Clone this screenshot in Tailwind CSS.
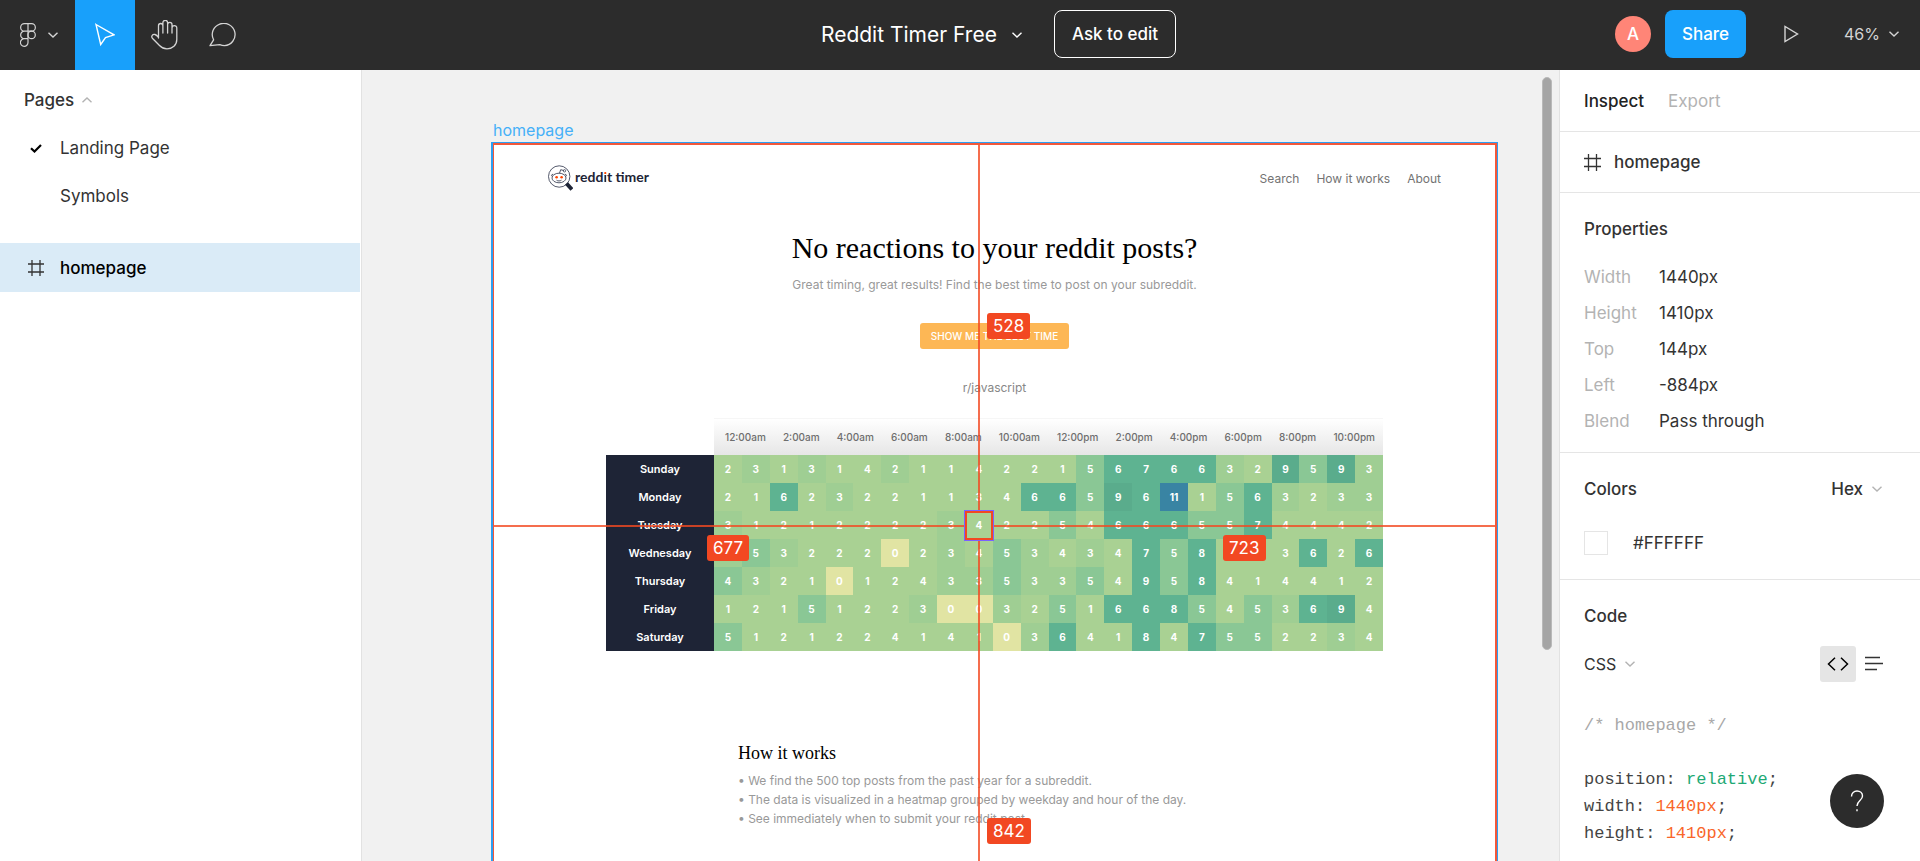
<!DOCTYPE html>
<html lang="en">
<head>
<meta charset="utf-8">
<meta name="viewport" content="width=device-width, initial-scale=1">
<title>Reddit Timer Free</title>
<script src="https://cdn.jsdelivr.net/npm/@tailwindcss/browser@4"></script>
</head>
<body class="flex h-screen flex-col overflow-hidden bg-white font-['Inter',sans-serif] text-[17px]/6 text-[#333]">

<header class="flex h-[70px] shrink-0 bg-[#2c2c2c] text-white">
  <div class="flex flex-1">
    <button aria-label="Main menu" class="flex w-[75px] items-center gap-3 pl-5">
      <svg class="h-6 w-4" viewBox="0 0 16 24" fill="none" stroke="#d4d4d4" stroke-width="1.2"><path d="M8 .7H4.4a3.7 3.7 0 0 0 0 7.5H8zM8 .7h3.6a3.7 3.7 0 0 1 0 7.5H8zM8 8.2H4.4a3.7 3.7 0 0 0 0 7.5H8zM8 15.7H4.4a3.8 3.8 0 1 0 3.6 3.8z"/><circle cx="11.6" cy="11.9" r="3.7"/></svg>
      <svg class="h-[6px] w-[10px]" viewBox="0 0 10 6" fill="none" stroke="#d4d4d4" stroke-width="1.4"><path d="M.5.7 5 5 9.500.7"/></svg>
    </button>
    <button aria-label="Move" class="flex w-[60px] items-center justify-center bg-[#18a0fb]">
      <svg class="h-6 w-5" viewBox="0 0 20 24" fill="none" stroke="#fff" stroke-width="1.4"><path d="M1 1.500 19 11.800 10.500 14.500 5.700 21.500z"/></svg>
    </button>
    <button aria-label="Hand tool" class="flex w-[58px] items-center justify-center">
      <svg class="h-[30px] w-[27px]" viewBox="0 0 27 30" fill="none" stroke="#d4d4d4" stroke-width="1.3" stroke-linejoin="round" stroke-linecap="round"><path d="M7.500 18V5.700a2.200 2.200 0 0 1 4.400 0V13M11.900 13V2.700a2.300 2.300 0 0 1 4.700 0V13M16.600 4.500a2.200 2.200 0 0 1 4.400 0V13M21 8a2.200 2.200 0 0 1 4.800 0V19.500c0 5.500-4.300 9.300-9.800 9.300-3.500 0-5.800-1.500-7.500-3.300L1.600 18.500C-.3 16.500 1.500 13.800 4 14.500c1.400.4 2.500 1.500 3.500 3"/></svg>
    </button>
    <button aria-label="Comment" class="flex w-[60px] items-center justify-center">
      <svg class="h-6 w-7" viewBox="0 0 28 24" fill="none" stroke="#d4d4d4" stroke-width="1.3" stroke-linejoin="round"><path d="M4.600 16.800A11.400 11.200 0 1 1 15.500 22.700c-1.700 0-3.300-.4-4.700-1L1 22.700z"/></svg>
    </button>
  </div>
  <div class="flex items-center pl-[98px]">
    <button class="flex items-center gap-[15px] text-[21px]/6">Reddit Timer Free
      <svg class="h-[6px] w-[10px]" viewBox="0 0 10 6" fill="none" stroke="#fff" stroke-width="1.4"><path d="M.5.700 5 5 9.500.700"/></svg>
    </button>
    <button class="mb-[2px] ml-8 h-12 rounded-lg border border-white px-[17px] font-medium">Ask to edit</button>
  </div>
  <div class="flex flex-1 items-center justify-end pr-[21px] pb-[2px]">
    <span class="flex size-9 items-center justify-center rounded-full bg-[#ff8577] font-medium">A</span>
    <button class="ml-[14px] h-12 rounded-lg bg-[#18a0fb] px-[17px] font-medium">Share</button>
    <button aria-label="Present" class="ml-[38px]">
      <svg class="h-[18px] w-[15px]" viewBox="0 0 15 18" fill="none" stroke="#d4d4d4" stroke-width="1.4"><path d="M1 1.500v15L13.500 9z"/></svg>
    </button>
    <button class="ml-[45px] flex items-center gap-[9px] text-base text-[#d4d4d4]">46%
      <svg class="h-[6px] w-[10px]" viewBox="0 0 10 6" fill="none" stroke="#d4d4d4" stroke-width="1.4"><path d="M.5.700 5 5 9.500.700"/></svg>
    </button>
  </div>
</header>

<div class="flex min-h-0 flex-1">
  <aside class="w-[362px] shrink-0 border-r border-[#e2e2e2] pt-[6px] pr-px">
    <button class="flex h-12 items-center gap-2 pl-6 font-medium">Pages
      <svg class="h-[6px] w-[10px]" viewBox="0 0 10 6" fill="none" stroke="#b3b3b3" stroke-width="1.4"><path d="M.500 5.300 5 1 9.500 5.300"/></svg>
    </button>
    <ul>
      <li class="flex h-12 items-center pl-[30px]">
        <svg class="h-[9px] w-3" viewBox="0 0 12 9" fill="none" stroke="#000" stroke-width="2.200"><path d="M1 4.200 4.500 7.500 11 1"/></svg>
        <a href="#" class="ml-[18px]">Landing Page</a>
      </li>
      <li class="flex h-12 items-center pl-[60px]"><a href="#">Symbols</a></li>
    </ul>
    <div class="mt-[23px] flex h-[49px] items-center bg-[#daebf7] pl-7 font-medium text-black">
      <svg class="size-4" viewBox="0 0 16 16" fill="none" stroke="#333" stroke-width="1.300"><path d="M4 0v16M12 0v16M0 4h16M0 12h16"/></svg>
      <a href="#" class="ml-4">homepage</a>
    </div>
  </aside>

  <main class="relative min-w-0 flex-1 overflow-hidden bg-[#f1f1f1] pt-12 pr-[61px] pl-[129px]">
    <h2 class="pl-[2px] text-base/6 text-[#45b0f8]">homepage</h2>

    <section class="border border-l-2 border-[#2b9ff3] bg-white">
      <div class="relative h-[900px] border-2 border-l border-[#f2583a] pt-5">
        <div class="flex h-[26px] items-center px-[54px]">
          <svg class="h-[26px] w-[25px]" viewBox="0 0 25 26" fill="none" stroke="#2a3046"><circle cx="11.200" cy="11.500" r="10.700" stroke-width=".8"/><path d="M18.500 18.500 24 24.500" stroke="#1e2436" stroke-width="4"/><ellipse cx="11" cy="13" rx="7" ry="4.800" stroke-width=".8"/><path d="M4.500 11.500c-1.500-.500-1.200-2.500.8-2.200M17.500 11.500c1.500-.500 1.200-2.500-.8-2.200M11.500 8.200l1.200-3.500 3 .8M8.500 15.200c1.500 1 3.500 1 5 0" stroke-width=".8"/><circle cx="16.500" cy="5.800" r="1.200" stroke-width=".7"/><circle cx="8.600" cy="12.300" r="1.300" fill="#ff4500" stroke="none"/><circle cx="13.600" cy="12.300" r="1.300" fill="#ff4500" stroke="none"/></svg>
          <span class="ml-[2px] pb-[2px] font-['Lato',sans-serif] text-sm/5 font-bold text-[#1e2436]">redd<span class="bg-linear-to-b from-[#ff4500] from-35% to-[#1e2436] to-35% bg-clip-text text-transparent">i</span>t t<span class="bg-linear-to-b from-[#ff4500] from-35% to-[#1e2436] to-35% bg-clip-text text-transparent">i</span>mer</span>
          <nav class="ml-auto flex gap-[17px] pt-[2px] text-xs/5 text-[#737373]"><a href="#">Search</a><a href="#">How it works</a><a href="#">About</a></nav>
        </div>

        <h1 class="mt-[39px] text-center font-['Liberation_Serif',serif] text-[30px]/9 text-black">No reactions to your reddit posts?</h1>
        <p class="mt-[9px] text-center text-xs/5 text-[#999]">Great timing, great results! Find the best time to post on your subreddit.</p>
        <div class="mt-7 flex justify-center"><button class="h-[26px] rounded-[3px] bg-[#fdb755] px-[11px] text-[10px]/4 font-medium text-white">SHOW ME THE BEST TIME</button></div>
        <p class="mt-[29px] text-center text-xs/5 text-[#878787]">r/javascript</p>

        <div class="mt-[21px] px-28">
          <table class="w-full table-fixed border-collapse text-center text-[10px]/4 font-bold text-white">
            <colgroup><col class="w-[108px]"><col span="24"></colgroup>
            <thead>
              <tr class="h-9"><td class="p-0"></td>
                <th colspan="24" class="bg-linear-to-b from-white to-[#e6e6e6] p-0 shadow-[0_-1px_#f6f6f6]">
                  <div class="flex justify-between pr-2 pl-[11px] text-[10px]/4 font-medium text-[#6e6e6e]"><span>12:00am</span><span>2:00am</span><span>4:00am</span><span>6:00am</span><span>8:00am</span><span>10:00am</span><span>12:00pm</span><span>2:00pm</span><span>4:00pm</span><span>6:00pm</span><span>8:00pm</span><span>10:00pm</span></div>
                </th></tr>
            </thead>
            <tbody id="heatmap"></tbody>
          </table>
        </div>

        <div class="mt-[90px] pl-[244px]">
          <h3 class="font-['Liberation_Serif',serif] text-lg/6 text-black">How it works</h3>
          <ul class="mt-[6px] text-xs/[19px] text-[#999]">
            <li>• We find the 500 top posts from the past year for a subreddit.</li>
            <li>• The data is visualized in a heatmap grouped by weekday and hour of the day.</li>
            <li>• See immediately when to submit your reddit post.</li>
          </ul>
        </div>

        <!-- Measurement guides around the hovered cell -->
        <div class="absolute top-0 left-[484px] h-[366px] w-[2px] bg-[#f24822]/80"></div>
        <div class="absolute top-[396px] bottom-0 left-[484px] w-[2px] bg-[#f24822]/80"></div>
        <div class="absolute top-[380px] left-0 h-[2px] w-[471px] bg-[#f24822]/80"></div>
        <div class="absolute top-[380px] right-0 left-[499px] h-[2px] bg-[#f24822]/80"></div>
        <div class="absolute top-[365px] left-[470px] h-[31px] w-[30px] border border-[#7b61ff]"><div class="size-full border-2 border-[#f24822]"></div></div>
        <span class="absolute top-[168px] left-[493px] rounded-[3px] bg-[#f24822] px-[6px] leading-[26px] text-white">528</span>
        <span class="absolute top-[390px] left-[213px] rounded-[3px] bg-[#f24822] px-[6px] leading-[26px] text-white">677</span>
        <span class="absolute top-[390px] left-[729px] rounded-[3px] bg-[#f24822] px-[6px] leading-[26px] text-white">723</span>
        <span class="absolute top-[673px] left-[493px] rounded-[3px] bg-[#f24822] px-[6px] leading-[26px] text-white">842</span>
      </div>
    </section>

    <div class="absolute top-[7px] right-[7px] h-[573px] w-[10px] rounded-full border border-[#b9b9b9] bg-[#a5a5a5]"></div>
  </main>

  <aside class="relative w-[361px] shrink-0 overflow-hidden border-l border-[#e2e2e2]">
    <div class="flex h-[62px] items-center gap-6 border-b border-[#e5e5e5] px-6">
      <button class="font-medium text-[#222]">Inspect</button><button class="text-[#b3b3b3]">Export</button>
    </div>
    <div class="flex h-[61px] items-center border-b border-[#e5e5e5] px-6 font-medium">
      <svg class="size-[17px]" viewBox="0 0 17 17" fill="none" stroke="#333" stroke-width="1.300"><path d="M4.500 0v17M12.500 0v17M0 4.500h17M0 12.500h17"/></svg>
      <span class="ml-[13px]">homepage</span>
    </div>
    <section class="border-b border-[#e5e5e5] px-6 pt-3 pb-[13px]">
      <h2 class="leading-[48px] font-medium">Properties</h2>
      <dl class="mt-[6px] grid grid-cols-[75px_1fr] leading-9">
        <dt class="text-[#b3b3b3]">Width</dt><dd>1440px</dd>
        <dt class="text-[#b3b3b3]">Height</dt><dd>1410px</dd>
        <dt class="text-[#b3b3b3]">Top</dt><dd>144px</dd>
        <dt class="text-[#b3b3b3]">Left</dt><dd>-884px</dd>
        <dt class="text-[#b3b3b3]">Blend</dt><dd>Pass through</dd>
      </dl>
    </section>
    <section class="border-b border-[#e5e5e5] px-6 pt-3 pb-3">
      <div class="flex h-12 items-center justify-between pr-[14px]">
        <h2 class="font-medium">Colors</h2>
        <label class="flex items-center gap-[9px]">
          <select aria-label="Color format" class="field-sizing-content appearance-none font-medium"><option>Hex</option></select>
          <svg class="h-[6px] w-[10px]" viewBox="0 0 10 6" fill="none" stroke="#b3b3b3" stroke-width="1.400"><path d="M.500.700 5 5 9.500.700"/></svg>
        </label>
      </div>
      <div class="mt-[6px] flex h-12 items-center gap-[25px]">
        <span class="size-6 border border-[#e5e5e5] bg-white"></span><span>#FFFFFF</span>
      </div>
    </section>
    <section class="px-6 pt-3">
      <h2 class="leading-[48px] font-medium">Code</h2>
      <div class="flex h-12 items-center">
        <label class="flex items-center gap-[9px]">
          <select aria-label="Code language" class="field-sizing-content appearance-none text-base"><option>CSS</option></select>
          <svg class="h-[6px] w-[10px]" viewBox="0 0 10 6" fill="none" stroke="#b3b3b3" stroke-width="1.400"><path d="M.500.700 5 5 9.500.700"/></svg>
        </label>
        <button aria-label="Code view" class="ml-auto flex size-9 items-center justify-center rounded-[3px] bg-[#e5e5e5]">
          <svg class="h-[14px] w-[22px]" viewBox="0 0 22 14" fill="none" stroke="#000" stroke-width="1.500"><path d="M8 .700 1.500 7 8 13.300M14 .700 20.500 7 14 13.300"/></svg>
        </button>
        <button aria-label="Table view" class="mr-[13px] ml-[9px]">
          <svg class="h-4 w-[18px]" viewBox="0 0 18 16" fill="none" stroke="#333" stroke-width="1.300"><path d="M0 1.500h15M0 7.500h18M0 13.500h12"/></svg>
        </button>
      </div>
      <div class="mt-6 font-['Liberation_Mono',monospace] leading-[27px] text-[#444]">
        <p class="mb-[27px] text-[#a8a8a8]">/* homepage */</p>
        <p>position: <span class="text-[#1ea974]">relative</span>;</p>
        <p>width: <span class="text-[#f9662a]">1440px</span>;</p>
        <p>height: <span class="text-[#f9662a]">1410px</span>;</p>
      </div>
    </section>
    <button aria-label="Help" class="absolute right-9 bottom-[33px] flex size-[54px] items-center justify-center rounded-full bg-[#2c2c2c]">
      <svg class="h-[22px] w-[14px]" viewBox="0 0 14 22" fill="none" stroke="#fff" stroke-width="1.400"><path d="M1.500 6.500C1.500 3 4 1 7 1s5.500 2 5.500 5c0 4.500-5.500 4.500-5.500 10M7 19.300v2"/></svg>
    </button>
  </aside>
</div>

<script>
// Shade per cell: a (empty) to g (most posts)
const shades = {
  a: 'bg-[#e1e4a3]', b: 'bg-[#a9d193]', c: 'bg-[#9fce93]', d: 'bg-[#8ac795]',
  e: 'bg-[#5eb391]', f: 'bg-[#5aac8c]', g: 'bg-[#3984a3]'
};
const week = [
  ['Sunday',    '2 3 1 3 1 4 2 1 1 4 2 2 1 5 6 7 6 6 3 2 9 5 9 3',  'bcbcbbcbbbbbbdeeeecbfdfc'],
  ['Monday',    '2 1 6 2 3 2 2 1 1 3 4 6 6 5 9 6 11 1 5 6 3 2 3 3', 'bbebcbbbbbbeedfegbdecbcc'],
  ['Tuesday',   '3 1 2 1 2 2 2 2 3 4 2 2 5 4 6 6 6 5 5 7 4 4 4 2',  'cbbbbbbbcbbbdbeeeddebbbb'],
  ['Wednesday', '3 5 3 2 2 2 0 2 3 4 5 3 4 3 4 7 5 8 4 4 3 6 2 6',  'cdcbbbabcbdcbcbedebbbebe'],
  ['Thursday',  '4 3 2 1 0 1 2 4 3 3 5 3 3 5 4 9 5 8 4 1 4 4 1 2',  'dcbbabbbccdccdbedebbbbbb'],
  ['Friday',    '1 2 1 5 1 2 2 3 0 0 3 2 5 1 6 6 8 5 4 5 3 6 9 4',  'bbbdbbbcaacbdbeeedbdcefb'],
  ['Saturday',  '5 1 2 1 2 2 4 1 4 1 0 3 6 4 1 8 4 7 5 5 2 2 3 4',  'dbbbbbbbbbacebbebeddbbcb']
];
document.getElementById('heatmap').innerHTML = week.map(([day, counts, tone]) =>
  `<tr class="h-7"><th scope="row" class="bg-[#1e2436] p-0 text-[11px]/4 font-semibold">${day}</th>` +
  counts.split(' ').map((n, i) => `<td class="p-0 ${shades[tone[i]]}">${n}</td>`).join('') + '</tr>').join('');
</script>
</body>
</html>
